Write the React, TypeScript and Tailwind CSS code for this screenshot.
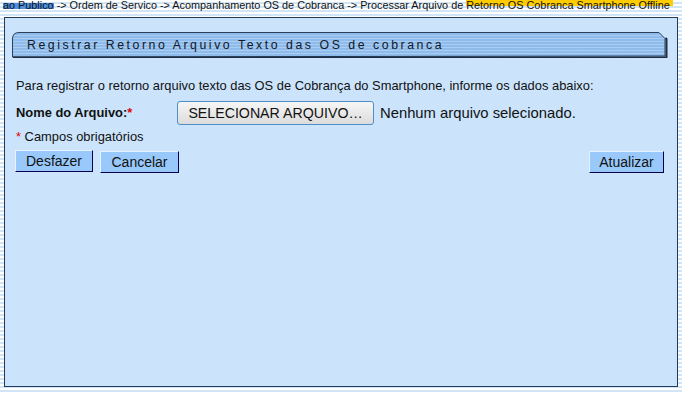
import React from "react";

function TitleBar() {
  return (
    <div className="relative h-[26px] w-[656px]">
      <svg className="absolute inset-0" width="656" height="26" viewBox="0 0 656 26">
        <defs>
          <pattern id="tb" width="4" height="3" patternUnits="userSpaceOnUse">
            <rect width="4" height="3" fill="#8fbbea" />
            <rect width="4" height="1" fill="#a9cdf3" />
          </pattern>
        </defs>
        <path d="M0.5 25 L0.5 7 Q0.5 0.5 7 0.5 L647 0.5 L653 6.5 L653 24 Z" fill="url(#tb)" stroke="#2a3f5a" strokeWidth="1" />
        <path d="M653.5 6 L654.5 7 L654.5 25.5 L1 25.5" fill="none" stroke="#1d2e44" strokeWidth="2" />
      </svg>
      <div className="relative flex h-full items-center pl-[15px] text-[12.3px] tracking-[2.55px] text-[#111827]" style={{ fontFamily: '"Liberation Sans", Arial, sans-serif' }}>
        Registrar Retorno Arquivo Texto das OS de cobranca
      </div>
    </div>
  );
}

function Btn({ label, w }: { label: string; w: string }) {
  return (
    <button
      className={`${w} h-[22px] border border-t-[#e6f2ff] border-l-[#e6f2ff] border-b-[#000050] border-r-[#000050] bg-[#99c9fb] text-[14px] leading-none text-[#111]`}
      style={{ fontFamily: '"Liberation Sans", Arial, sans-serif' }}
    >
      {label}
    </button>
  );
}

export default function App() {
  return (
    <div
      className="h-[394px] w-[682px] overflow-hidden bg-[repeating-linear-gradient(to_bottom,#ffffff_0px,#ffffff_2px,#d2e5f6_2px,#d2e5f6_4px)]"
      style={{ fontFamily: '"Liberation Sans", Arial, sans-serif' }}
    >
      <div className="h-[17px] overflow-hidden">
        <div className="-mt-[1px] flex whitespace-nowrap pl-[3px] text-[10.85px] leading-[12px] text-[#111]">
          <span className="bg-[linear-gradient(to_bottom,transparent_0px,transparent_4px,#4d8fe0_4px,#4d8fe0_10px,transparent_10px)]">ao Publico</span>
          <span>&nbsp;-&gt; Ordem de Servico -&gt; Acompanhamento OS de Cobranca -&gt; Processar Arquivo de&nbsp;</span>
          <span className="bg-[linear-gradient(to_bottom,#ffcc00_0px,#ffcc00_7px,transparent_7px)]">Retorno OS Cobranca Smartphone Offline&nbsp;</span>
        </div>
      </div>
      <div className="ml-[4px] flex h-[370px] w-[674px] flex-col border border-[#233a58] bg-[#cbe4fc] pt-[14px]">
        <div className="pl-[7px]">
          <TitleBar />
        </div>
        <div className="mt-[21px] pl-[11px] text-[12.9px] leading-[14px] text-[#111]">
          Para registrar o retorno arquivo texto das OS de Cobrança do Smartphone, informe os dados abaixo:
        </div>
        <div className="mt-[8px] flex items-center pl-[11px]">
          <div className="w-[161px] text-[12.9px] font-bold text-[#111]">
            Nome do Arquivo:<span className="text-[#e00000]">*</span>
          </div>
          <button className="h-[24px] w-[197px] rounded-[3px] border border-[#4f8fc6] bg-[linear-gradient(to_bottom,#f6f6f6,#dcdcdc)] text-[14.2px] leading-none text-[#111]">
            SELECIONAR ARQUIVO…
          </button>
          <span className="ml-[6px] text-[14.8px] text-[#111]">Nenhum arquivo selecionado.</span>
        </div>
        <div className="mt-[5px] pl-[11px] text-[12.9px] leading-[14px] text-[#111]">
          <span className="text-[#e00000]">*</span> Campos obrigatórios
        </div>
        <div className="mt-[6px] flex pl-[10px] pr-[13px]">
          <Btn label="Desfazer" w="w-[78px]" />
          <div className="ml-[7px]">
            <Btn label="Cancelar" w="w-[79px]" />
          </div>
          <div className="ml-auto">
            <Btn label="Atualizar" w="w-[75px]" />
          </div>
        </div>
      </div>
    </div>
  );
}
